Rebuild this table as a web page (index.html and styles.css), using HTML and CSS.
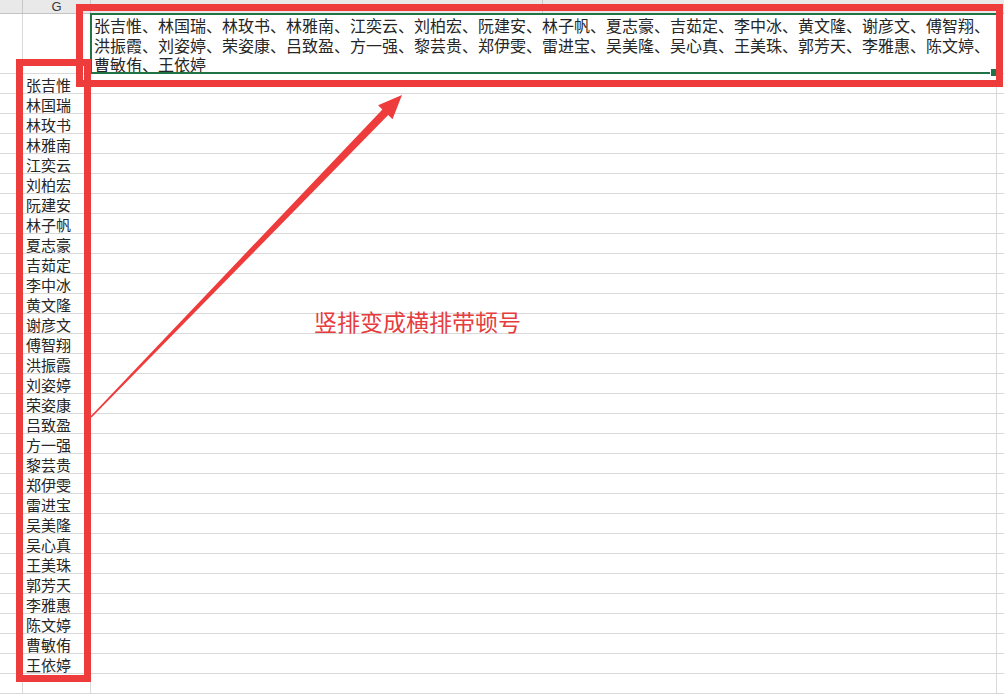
FILE: index.html
```html
<!DOCTYPE html>
<html lang="zh-CN">
<head>
<meta charset="utf-8">
<title>竖排变成横排带顿号</title>
<link rel="stylesheet" href="styles.css">
</head>
<body>
<div class="sheet">
  <div class="hdr">
    <div class="hc hc-f"></div>
    <div class="hc hc-g">G</div>
    <div class="hc hc-h"></div>
    <div class="hc hc-i"></div>
  </div>
  <div class="row row-tall">
    <div class="cell c-f"></div>
    <div class="cell c-g"></div>
    <div class="cell c-h sel">张吉惟、林国瑞、林玫书、林雅南、江奕云、刘柏宏、阮建安、林子帆、夏志豪、吉茹定、李中冰、黄文隆、谢彦文、傅智翔、<br>洪振霞、刘姿婷、荣姿康、吕致盈、方一强、黎芸贵、郑伊雯、雷进宝、吴美隆、吴心真、王美珠、郭芳天、李雅惠、陈文婷、<br>曹敏侑、王依婷</div>
    <div class="cell c-i"></div>
  </div>
  <div class="row"><div class="cell c-f"></div><div class="cell c-g">张吉惟</div><div class="cell c-h"></div><div class="cell c-i"></div></div>
  <div class="row"><div class="cell c-f"></div><div class="cell c-g">林国瑞</div><div class="cell c-h"></div><div class="cell c-i"></div></div>
  <div class="row"><div class="cell c-f"></div><div class="cell c-g">林玫书</div><div class="cell c-h"></div><div class="cell c-i"></div></div>
  <div class="row"><div class="cell c-f"></div><div class="cell c-g">林雅南</div><div class="cell c-h"></div><div class="cell c-i"></div></div>
  <div class="row"><div class="cell c-f"></div><div class="cell c-g">江奕云</div><div class="cell c-h"></div><div class="cell c-i"></div></div>
  <div class="row"><div class="cell c-f"></div><div class="cell c-g">刘柏宏</div><div class="cell c-h"></div><div class="cell c-i"></div></div>
  <div class="row"><div class="cell c-f"></div><div class="cell c-g">阮建安</div><div class="cell c-h"></div><div class="cell c-i"></div></div>
  <div class="row"><div class="cell c-f"></div><div class="cell c-g">林子帆</div><div class="cell c-h"></div><div class="cell c-i"></div></div>
  <div class="row"><div class="cell c-f"></div><div class="cell c-g">夏志豪</div><div class="cell c-h"></div><div class="cell c-i"></div></div>
  <div class="row"><div class="cell c-f"></div><div class="cell c-g">吉茹定</div><div class="cell c-h"></div><div class="cell c-i"></div></div>
  <div class="row"><div class="cell c-f"></div><div class="cell c-g">李中冰</div><div class="cell c-h"></div><div class="cell c-i"></div></div>
  <div class="row"><div class="cell c-f"></div><div class="cell c-g">黄文隆</div><div class="cell c-h"></div><div class="cell c-i"></div></div>
  <div class="row"><div class="cell c-f"></div><div class="cell c-g">谢彦文</div><div class="cell c-h"></div><div class="cell c-i"></div></div>
  <div class="row"><div class="cell c-f"></div><div class="cell c-g">傅智翔</div><div class="cell c-h"></div><div class="cell c-i"></div></div>
  <div class="row"><div class="cell c-f"></div><div class="cell c-g">洪振霞</div><div class="cell c-h"></div><div class="cell c-i"></div></div>
  <div class="row"><div class="cell c-f"></div><div class="cell c-g">刘姿婷</div><div class="cell c-h"></div><div class="cell c-i"></div></div>
  <div class="row"><div class="cell c-f"></div><div class="cell c-g">荣姿康</div><div class="cell c-h"></div><div class="cell c-i"></div></div>
  <div class="row"><div class="cell c-f"></div><div class="cell c-g">吕致盈</div><div class="cell c-h"></div><div class="cell c-i"></div></div>
  <div class="row"><div class="cell c-f"></div><div class="cell c-g">方一强</div><div class="cell c-h"></div><div class="cell c-i"></div></div>
  <div class="row"><div class="cell c-f"></div><div class="cell c-g">黎芸贵</div><div class="cell c-h"></div><div class="cell c-i"></div></div>
  <div class="row"><div class="cell c-f"></div><div class="cell c-g">郑伊雯</div><div class="cell c-h"></div><div class="cell c-i"></div></div>
  <div class="row"><div class="cell c-f"></div><div class="cell c-g">雷进宝</div><div class="cell c-h"></div><div class="cell c-i"></div></div>
  <div class="row"><div class="cell c-f"></div><div class="cell c-g">吴美隆</div><div class="cell c-h"></div><div class="cell c-i"></div></div>
  <div class="row"><div class="cell c-f"></div><div class="cell c-g">吴心真</div><div class="cell c-h"></div><div class="cell c-i"></div></div>
  <div class="row"><div class="cell c-f"></div><div class="cell c-g">王美珠</div><div class="cell c-h"></div><div class="cell c-i"></div></div>
  <div class="row"><div class="cell c-f"></div><div class="cell c-g">郭芳天</div><div class="cell c-h"></div><div class="cell c-i"></div></div>
  <div class="row"><div class="cell c-f"></div><div class="cell c-g">李雅惠</div><div class="cell c-h"></div><div class="cell c-i"></div></div>
  <div class="row"><div class="cell c-f"></div><div class="cell c-g">陈文婷</div><div class="cell c-h"></div><div class="cell c-i"></div></div>
  <div class="row"><div class="cell c-f"></div><div class="cell c-g">曹敏侑</div><div class="cell c-h"></div><div class="cell c-i"></div></div>
  <div class="row"><div class="cell c-f"></div><div class="cell c-g">王依婷</div><div class="cell c-h"></div><div class="cell c-i"></div></div>
  <div class="row"><div class="cell c-f"></div><div class="cell c-g"></div><div class="cell c-h"></div><div class="cell c-i"></div></div>
  <div class="row"><div class="cell c-f"></div><div class="cell c-g"></div><div class="cell c-h"></div><div class="cell c-i"></div></div>
</div>

<div class="mark mark-top"></div>
<div class="mark mark-col"></div>
<svg class="arrow" width="1004" height="694" viewBox="0 0 1004 694" aria-hidden="true">
  <polygon points="91.6,417.6 388.2,115.1 392.5,119.2 402,95 378.1,105.3 382.4,109.5 90.4,416.4" fill="#ee3b3b"/>
</svg>
<div class="note">竖排变成横排带顿号</div>
</body>
</html>
```

FILE: styles.css
```css
* {
  box-sizing: border-box;
}

html, body {
  margin: 0;
  padding: 0;
}

body {
  width: 1004px;
  height: 694px;
  overflow: hidden;
  position: relative;
  background: #ffffff;
  font-family: "Noto Sans CJK SC", "Noto Sans", sans-serif;
  color: #262626;
}

.sheet {
  display: flex;
  flex-direction: column;
  width: 1004px;
  height: 694px;
  overflow: hidden;
}

.hdr {
  display: flex;
  flex: none;
  height: 14px;
  background: #e9e9e9;
  border-bottom: 1px solid #c3c3c3;
}

.hc {
  height: 13px;
  border-right: 1px solid #c8c8c8;
  font-family: "Liberation Sans", Arial, sans-serif;
  font-size: 13px;
  line-height: 13px;
  color: #3a3a3a;
  text-align: center;
}

.hc-f { width: 23px; }
.hc-g { width: 68px; }
.hc-h { width: 452px; }
.hc-i { flex: 1; border-right: none; }

.row {
  display: flex;
  flex: none;
  height: 20px;
  border-bottom: 1px solid #d9d9d9;
}

.row-tall {
  height: 60px;
}

.cell {
  height: 100%;
  border-right: 1px solid #d9d9d9;
  white-space: nowrap;
}

.c-f { width: 23px; }

.c-g {
  width: 68px;
  padding: 3px 0 0 3px;
  font-size: 15px;
  line-height: 15px;
}

.c-h { width: 906px; flex: none; }
.c-i { flex: 1; border-right: none; }

.sel {
  position: relative;
  padding: 2px 0 0 3px;
  font-size: 16px;
  line-height: 19.5px;
  outline: 2px solid #217346;
  outline-offset: -1px;
  z-index: 1;
}

.sel::after {
  content: "";
  position: absolute;
  right: -3px;
  bottom: -4px;
  width: 7px;
  height: 7px;
  background: #217346;
  border: 1px solid #ffffff;
}

.mark {
  position: absolute;
  border: 7px solid #ee3b3b;
  z-index: 2;
}

.mark-top {
  left: 76px;
  top: 4px;
  width: 927px;
  height: 83px;
}

.mark-col {
  left: 16px;
  top: 59px;
  width: 75px;
  height: 623px;
}

.arrow {
  position: absolute;
  left: 0;
  top: 0;
  z-index: 3;
  pointer-events: none;
}

.note {
  position: absolute;
  left: 314px;
  top: 310px;
  font-size: 23px;
  line-height: 23px;
  color: #e73c3e;
  white-space: nowrap;
  z-index: 3;
}
```
